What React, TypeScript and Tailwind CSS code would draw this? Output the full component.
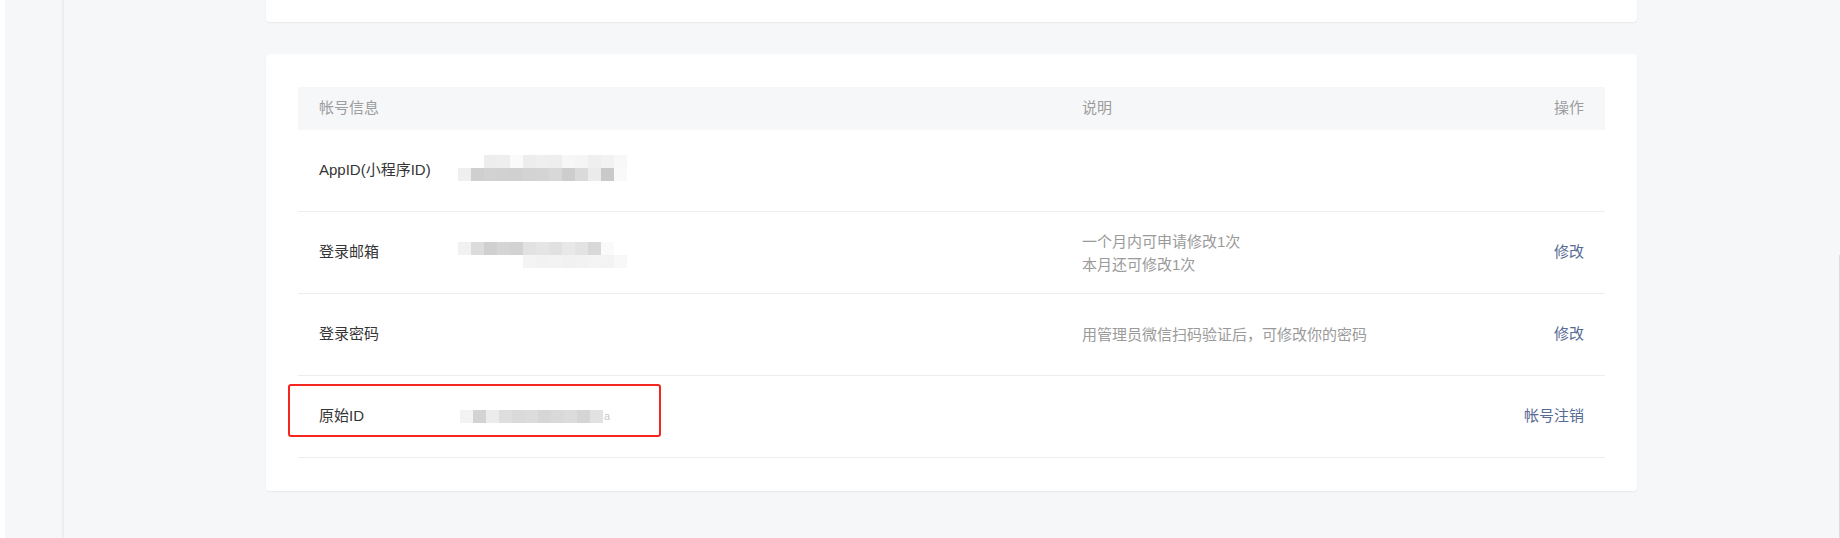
import React from "react";

type PixRow = { offset: number; cells: string[] };

function Pix({ rows, className = "" }: { rows: PixRow[]; className?: string }) {
  return (
    <div className={"flex flex-col blur-[0.6px] " + className}>
      {rows.map((r, i) => (
        <div key={i} className="flex h-[13px]" style={{ marginLeft: r.offset }}>
          {r.cells.map((c, j) => (
            <div key={j} className="h-[13px] w-[13px]" style={{ backgroundColor: c }} />
          ))}
        </div>
      ))}
    </div>
  );
}

const appIdPix: PixRow[] = [
  {
    offset: 26,
    cells: ["#ededed", "#eeeeee", "#fafafa", "#ededed", "#efefef", "#eeeeee", "#f7f7f7", "#f5f5f5", "#efefef", "#f2f2f2", "#f8f8f8"],
  },
  {
    offset: 0,
    cells: ["#efefef", "#cfcfcf", "#d2d2d2", "#d1d1d1", "#d0d0d0", "#d3d3d3", "#d4d4d4", "#d8d8d8", "#cdcdcd", "#dadada", "#ebebeb", "#c9c9c9", "#f9f9f9"],
  },
];

const emailPix: PixRow[] = [
  {
    offset: 0,
    cells: ["#f1f1f1", "#dcdcdc", "#d0d0d0", "#d5d5d5", "#d2d2d2", "#e2e2e2", "#e5e5e5", "#e1e1e1", "#e8e8e8", "#e3e3e3", "#d8d8d8", "#fafafa"],
  },
  {
    offset: 65,
    cells: ["#f4f4f4", "#f2f2f2", "#f3f3f3", "#f1f1f1", "#f2f2f2", "#f4f4f4", "#f3f3f3", "#f8f8f8"],
  },
];

const origPix: PixRow[] = [
  {
    offset: 0,
    cells: ["#f3f3f3", "#d3d3d3", "#ececec", "#dedede", "#dadada", "#dcdcdc", "#d6d6d6", "#d9d9d9", "#dcdcdc", "#d5d5d5", "#e2e2e2"],
  },
];

function Row({
  label,
  value,
  desc,
  action,
  children,
}: {
  label: string;
  value?: React.ReactNode;
  desc?: React.ReactNode;
  action?: string;
  children?: React.ReactNode;
}) {
  return (
    <div className="relative flex h-[82px] items-center border-b border-[#ededed] pl-[21px] pr-[21px]">
      {children}
      <div className="flex w-[763px] items-center">
        <div className="w-[139px] text-[#353535]">{label}</div>
        <div className="flex-1">{value}</div>
      </div>
      <div className="flex-1 text-[15px] leading-[23px] text-[#9a9a9a]">{desc}</div>
      <div className="text-[#576b95]">{action}</div>
    </div>
  );
}

export default function App() {
  return (
    <div
      className="flex h-[538px] w-[1840px] overflow-hidden bg-[#f6f7f9] text-[15px]"
      style={{ fontFamily: '"Liberation Sans", "Noto Sans CJK SC", sans-serif' }}
    >
      <div className="w-[5px] bg-white" />
      <div className="w-[57px] bg-[#f6f7f9]" />
      <div className="w-[2px] bg-[#eceef1]" />
      <div className="flex w-[1775px] flex-col pl-[202px]">
        <div className="-mt-[10px] h-[32px] w-[1371px] rounded-[4px] bg-white shadow-[0_1px_2px_rgba(0,0,0,0.06)]" />
        <div className="mt-[32px] w-[1371px] rounded-[4px] bg-white px-[32px] pb-[33px] pt-[33px] shadow-[0_1px_2px_rgba(0,0,0,0.06)]">
          <div className="flex h-[43px] items-center bg-[#f6f7f9] pl-[21px] pr-[21px] text-[#9d9d9d]">
            <div className="w-[763px]">帐号信息</div>
            <div className="flex-1">说明</div>
            <div>操作</div>
          </div>
          <Row label="AppID(小程序ID)" value={<Pix rows={appIdPix} className="-mt-[5px]" />} />
          <Row
            label="登录邮箱"
            value={<Pix rows={emailPix} className="mt-[5px]" />}
            desc={
              <>
                <div>一个月内可申请修改1次</div>
                <div>本月还可修改1次</div>
              </>
            }
            action="修改"
          />
          <Row label="登录密码" desc="用管理员微信扫码验证后，可修改你的密码" action="修改" />
          <Row
            label="原始ID"
            value={
              <div className="flex items-end">
                <Pix rows={origPix} className="ml-[2px]" />
                <span className="ml-[1px] text-[11px] leading-[13px] text-[#c8c8c8]">a</span>
              </div>
            }
            action="帐号注销"
          >
            <div className="absolute left-[-10px] top-[8px] h-[53px] w-[373px] rounded-[3px] border-2 border-[#f5261f]" />
          </Row>
        </div>
      </div>
      <div className="flex w-[1px] flex-col">
        <div className="h-[255px]" />
        <div className="flex-1 bg-[#dcdcdc]" />
      </div>
    </div>
  );
}
